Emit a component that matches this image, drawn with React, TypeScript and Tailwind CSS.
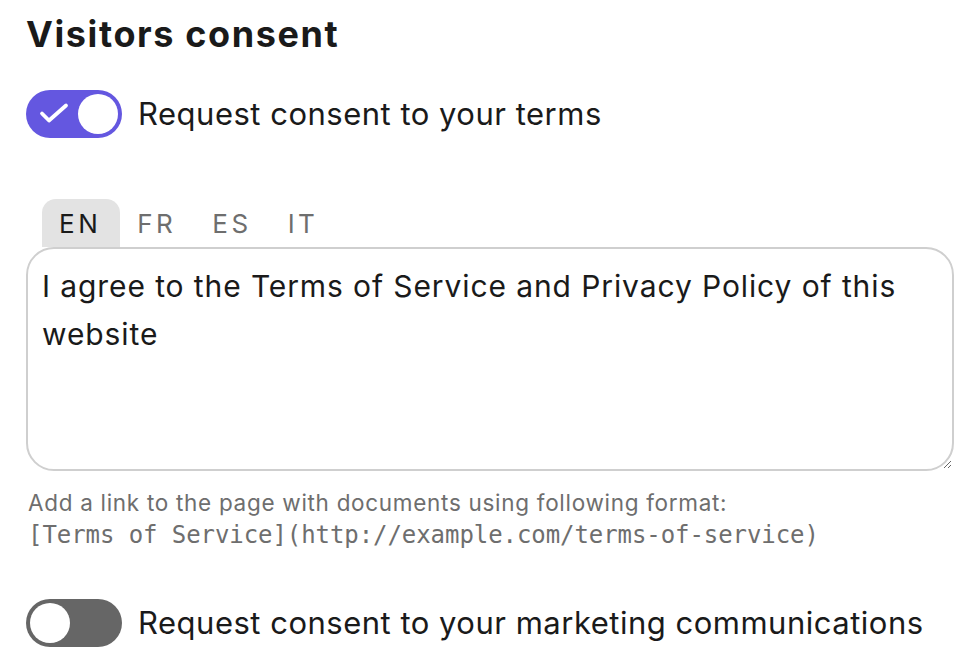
import React, { useState } from 'react';

const Toggle: React.FC<{ on: boolean; onChange: () => void }> = ({ on, onChange }) => (
  <button
    onClick={onChange}
    className={`relative w-[96px] h-[48px] rounded-full shrink-0 ${on ? 'bg-[#6457e0]' : 'bg-[#666666]'}`}
  >
    {on && (
      <svg className="absolute left-[13px] top-[12px]" width="30" height="24" viewBox="0 0 30 24" fill="none">
        <path d="M3 11.5l7 7L27 3.5" stroke="white" strokeWidth="3.8" strokeLinecap="round" strokeLinejoin="round" />
      </svg>
    )}
    <span
      className={`absolute top-[4px] w-[40px] h-[40px] rounded-full bg-white ${on ? 'left-[52px]' : 'left-[4px]'}`}
    />
  </button>
);

const langs = ['EN', 'FR', 'ES', 'IT'];

const App: React.FC = () => {
  const [terms, setTerms] = useState(true);
  const [marketing, setMarketing] = useState(false);
  const [lang, setLang] = useState('EN');
  const [text, setText] = useState('I agree to the Terms of Service and Privacy Policy of this website');

  return (
    <div className="w-[972px] h-[672px] bg-white px-[26px] pt-[12px] text-[#1a1a1a] font-['Inter',sans-serif] overflow-hidden">
      <h2 className="text-[36px] font-bold leading-[44px] tracking-[1.6px]">Visitors consent</h2>

      <div className="flex items-center gap-[16px] mt-[34px]">
        <Toggle on={terms} onChange={() => setTerms(!terms)} />
        <span className="text-[31px] leading-[36px] tracking-[0.5px]">Request consent to your terms</span>
      </div>

      {/* Language tabs */}
      <div className="flex mt-[61px] ml-[16px]">
        {langs.map(l => (
          <button
            key={l}
            onClick={() => setLang(l)}
            className={`h-[48px] pl-[17px] pr-[19px] text-[26px] tracking-[3.5px] rounded-t-[14px] ${
              lang === l ? 'bg-[#e3e3e3] text-[#1a1a1a]' : 'text-[#6e6e6e]'
            }`}
          >
            {l}
          </button>
        ))}
      </div>

      <textarea
        value={text}
        onChange={e => setText(e.target.value)}
        className="block w-[928px] h-[224px] border-2 border-[#cfcfcf] rounded-[28px] px-[14px] py-[13px] text-[30px] leading-[48px] tracking-[0.9px] text-[#1a1a1a] outline-none resize-y"
      />

      <p className="mt-[16px] text-[22.5px] leading-[32px] tracking-[0.7px] text-[#6e6e6e] ml-[2px]">
        Add a link to the page with documents using following format:
      </p>
      <p className="text-[24px] leading-[32px] text-[#6e6e6e] font-['DejaVu_Sans_Mono',monospace] ml-[2px] tracking-[-0.07px]">
        [Terms of Service](http://example.com/terms-of-service)
      </p>

      <div className="flex items-center gap-[16px] mt-[48px]">
        <Toggle on={marketing} onChange={() => setMarketing(!marketing)} />
        <span className="text-[31px] leading-[36px] tracking-[0.5px]">Request consent to your marketing communications</span>
      </div>
    </div>
  );
};

export default App;
